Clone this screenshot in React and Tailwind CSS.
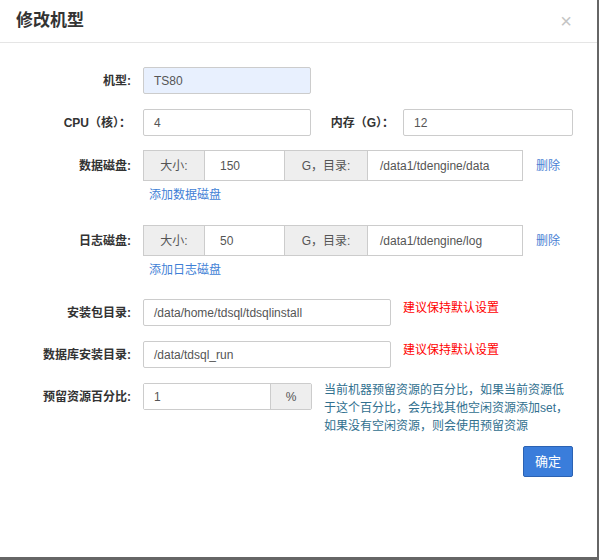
import React from "react";

const Label = ({ children, className = "" }) => (
  <div className={`w-[131px] shrink-0 text-right font-bold text-[12px] text-[#333] ${className}`}>
    {children}
  </div>
);

const Input = ({ value, className = "", bg = "bg-white" }) => (
  <div
    className={`h-[27px] border border-[#ccc] rounded-[2px] ${bg} pl-[10px] flex items-center text-[12px] text-[#555] ${className}`}
  >
    {value}
  </div>
);

const DiskRow = ({ label, size, path }) => (
  <div className="flex items-center h-[31px]">
    <Label>{label}</Label>
    <div className="ml-3 flex h-[31px] border border-[#ccc] text-[12px] text-[#555]">
      <div className="w-[61px] bg-[#eee] border-r border-[#ccc] flex items-center justify-center">大小:</div>
      <div className="w-[79px] bg-white pl-[15px] flex items-center">{size}</div>
      <div className="w-[84px] bg-[#eee] border-x border-[#ccc] flex items-center justify-center">G，目录:</div>
      <div className="w-[154px] bg-white pl-[12px] flex items-center">{path}</div>
    </div>
    <a className="ml-[13px] text-[12px] text-[#4a7fd4]">删除</a>
  </div>
);

const AddLink = ({ children }) => (
  <div className="h-[44px] pt-[5px] pl-[149px] text-[12px] leading-[18px] text-[#3f7fd6]">{children}</div>
);

export default function App() {
  return (
    <div
      className="min-h-[560px] bg-[#666]"
      style={{ fontFamily: '"Liberation Sans", "Noto Sans CJK SC", sans-serif' }}
    >
      <div className="w-[597px] h-[557px] bg-white">
        {/* Header */}
        <div className="h-[43px] border-b border-[#e5e5e5] flex items-center justify-between pl-4 pr-[25px]">
          <h3 className="text-[17px] font-bold text-[#333]">修改机型</h3>
          <span className="text-[20px] leading-none text-[#c4c4c4]">×</span>
        </div>

        {/* Body */}
        <div className="pt-6">
          <div className="flex items-center">
            <Label>机型:</Label>
            <Input value="TS80" bg="bg-[#e8f0fe]" className="ml-3 w-[168px]" />
          </div>

          <div className="flex items-center mt-[15px]">
            <Label>CPU（核）：</Label>
            <Input value="4" className="ml-3 w-[168px]" />
            <div className="w-[83px] text-right font-bold text-[12px] text-[#333]">内存（G）：</div>
            <Input value="12" className="ml-[9px] w-[170px]" />
          </div>

          <div className="mt-[14px]">
            <DiskRow label="数据磁盘:" size="150" path="/data1/tdengine/data" />
            <AddLink>添加数据磁盘</AddLink>
          </div>

          <div>
            <DiskRow label="日志磁盘:" size="50" path="/data1/tdengine/log" />
            <AddLink>添加日志磁盘</AddLink>
          </div>

          <div className="flex items-center -mt-[1px]">
            <Label>安装包目录:</Label>
            <Input value="/data/home/tdsql/tdsqlinstall" className="ml-3 w-[248px]" />
            <span className="ml-3 text-[12px] text-[#f00] self-start">建议保持默认设置</span>
          </div>

          <div className="flex items-center mt-[15px]">
            <Label>数据库安装目录:</Label>
            <Input value="/data/tdsql_run" className="ml-3 w-[248px]" />
            <span className="ml-3 text-[12px] text-[#f00] self-start">建议保持默认设置</span>
          </div>

          <div className="flex items-start mt-[15px]">
            <Label className="h-[27px] flex items-center justify-end">预留资源百分比:</Label>
            <div className="ml-3 flex h-[27px] border border-[#ccc] rounded-[2px] text-[12px] text-[#555]">
              <div className="w-[126px] pl-[10px] flex items-center bg-white">1</div>
              <div className="w-[41px] bg-[#eee] border-l border-[#ccc] flex items-center justify-center">%</div>
            </div>
            <p className="ml-3 -mt-[2px] w-[244px] text-[12px] leading-[18px] text-[#31708f]">
              当前机器预留资源的百分比，如果当前资源低于这个百分比，会先找其他空闲资源添加set，如果没有空闲资源，则会使用预留资源
            </p>
          </div>

          <div className="flex justify-end pr-[24px] mt-[11px]">
            <button className="w-[50px] h-[31px] bg-[#3a7ddb] border border-[#2b62b3] rounded-[2px] text-white text-[13px]">
              确定
            </button>
          </div>
        </div>
      </div>
    </div>
  );
}
